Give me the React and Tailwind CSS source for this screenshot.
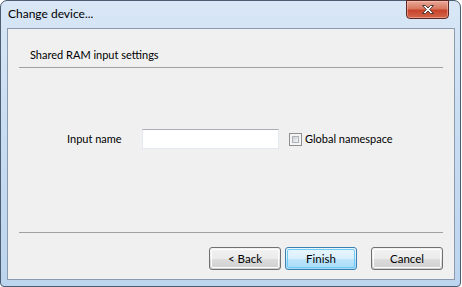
import React from "react";

const font = { fontFamily: 'Lato, "Noto Sans", sans-serif' };

function Btn({ children, primary }) {
  return (
    <div
      className={
        "w-[72px] h-[23px] rounded-[3px] border flex items-center justify-center text-[11.5px] text-black p-[1px] " +
        (primary
          ? "border-[#3c7fb1] bg-[linear-gradient(#eaf6fd_0%,#d9f0fc_50%,#bee6fd_51%,#a7d9f5_100%)]"
          : "border-[#707070] bg-[linear-gradient(#f2f2f2_0%,#ebebeb_50%,#dddddd_51%,#cfcfcf_100%)]")
      }
    >
      <div
        className={
          "w-full h-full rounded-[2px] border flex items-center justify-center leading-none " +
          (primary ? "border-[#6ecbf5]" : "border-[#fcfcfc]")
        }
      >
        {children}
      </div>
    </div>
  );
}

export default function App() {
  return (
    <div className="w-[462px] h-[287px] bg-white" style={font}>
      <div className="w-[461px] h-[287px] rounded-t-[7px] rounded-b-[4px] border border-[#4b5d71] bg-[linear-gradient(180deg,#d9e7f6_0%,#cadef2_40%,#bcd4ee_100%)] flex flex-col pl-[6px] pr-[5px] pb-[6px]">
        <div className="h-[27px] flex items-start justify-between shrink-0">
          <div className="pt-[5px] pl-[1px] text-[12px] leading-[16px] text-black">Change device...</div>
          <div className="mt-[-1px] mr-[6px] w-[43px] h-[19px] rounded-b-[4px] border border-[#5a2a22] bg-[linear-gradient(180deg,#e9a99a_0%,#d8785f_45%,#c7432b_55%,#d2664b_100%)] flex items-center justify-center shadow-[inset_0_0_0_1px_rgba(255,200,190,0.5)]">
            <svg width="14" height="11" viewBox="0 0 14 11">
              <path
                d="M1.5 1.5 L4.5 1.5 L7 4 L9.5 1.5 L12.5 1.5 L8.7 5.5 L12.5 9.5 L9.5 9.5 L7 7 L4.5 9.5 L1.5 9.5 L5.3 5.5 Z"
                fill="#ffffff"
                stroke="#4a3a3a"
                strokeWidth="1"
                strokeLinejoin="round"
              />
            </svg>
          </div>
        </div>
        <div className="flex-1 border border-[#8a9bb0] bg-[#f0f0f0] flex flex-col text-[11px] text-black">
          <div className="h-[38px] pl-[22px] pt-[18px] leading-[16px] shrink-0">
            Shared RAM input settings
          </div>
          <div className="mx-[11px] h-px bg-[#a0a0a0] shrink-0" />
          <div className="flex-1 pt-[61px]">
            <div className="flex items-center h-[20px]">
              <div className="w-[134px] pl-[59px] leading-[16px]">Input name</div>
              <div className="w-[137px] h-[20px] bg-white border border-[#e3e9ef] border-t-[#abadb3]" />
              <div className="ml-[10px] w-[13px] h-[13px] border border-[#8e8f8f] bg-[#f4f4f4] p-[2px]">
                <div className="w-full h-full border border-[#aeb3b9] bg-[linear-gradient(135deg,#cbcfd5,#f6f6f6)]" />
              </div>
              <div className="ml-[3px] leading-[16px]">Global namespace</div>
            </div>
          </div>
          <div className="mx-[11px] h-px bg-[#a0a0a0] shrink-0" />
          <div className="h-[46px] shrink-0 pt-[14px] flex justify-end pr-[11px]">
            <Btn>&lt; Back</Btn>
            <div className="w-[4px]" />
            <Btn primary>Finish</Btn>
            <div className="w-[14px]" />
            <Btn>Cancel</Btn>
          </div>
        </div>
      </div>
    </div>
  );
}
